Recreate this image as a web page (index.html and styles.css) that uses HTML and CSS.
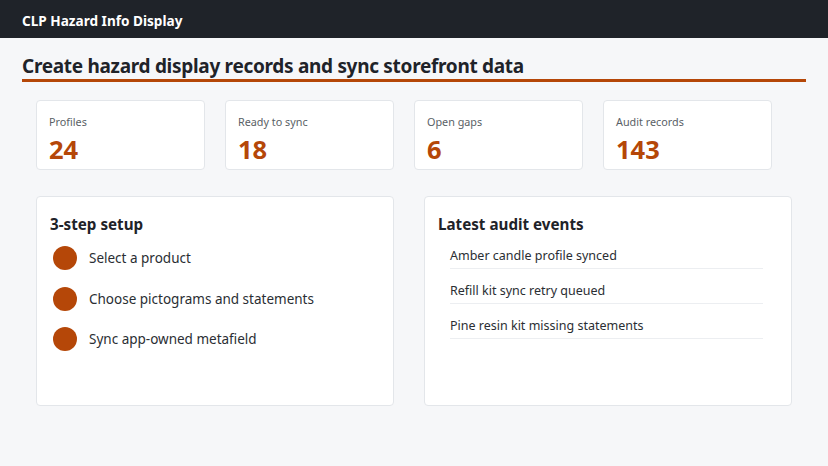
FILE: index.html
```html
<!DOCTYPE html>
<html lang="en">
<head>
<meta charset="utf-8">
<title>CLP Hazard Info Display</title>
<link rel="stylesheet" href="styles.css">
</head>
<body>
<header class="topbar">CLP Hazard Info Display</header>
<main class="page">
  <h1 class="page-title">Create hazard display records and sync storefront data</h1>
  <section class="stats">
    <div class="stat"><div class="stat-label">Profiles</div><div class="stat-value">24</div></div>
    <div class="stat"><div class="stat-label">Ready to sync</div><div class="stat-value">18</div></div>
    <div class="stat"><div class="stat-label">Open gaps</div><div class="stat-value">6</div></div>
    <div class="stat"><div class="stat-label">Audit records</div><div class="stat-value">143</div></div>
  </section>
  <section class="panels">
    <div class="panel">
      <h2 class="panel-title">3-step setup</h2>
      <ol class="steps">
        <li class="step"><span class="dot"></span>Select a product</li>
        <li class="step"><span class="dot"></span>Choose pictograms and statements</li>
        <li class="step"><span class="dot"></span>Sync app-owned metafield</li>
      </ol>
    </div>
    <div class="panel">
      <h2 class="panel-title">Latest audit events</h2>
      <ul class="events">
        <li class="event">Amber candle profile synced</li>
        <li class="event">Refill kit sync retry queued</li>
        <li class="event">Pine resin kit missing statements</li>
      </ul>
    </div>
  </section>
</main>
</body>
</html>
```
FILE: styles.css
```css
* { box-sizing: border-box; }
html, body { margin: 0; padding: 0; }
body {
  background: #f6f7f9;
  font-family: "Noto Sans", "Open Sans", sans-serif;
  color: #1f2329;
  width: 828px;
  height: 466px;
  overflow: hidden;
}
.topbar {
  height: 38px;
  background: #1f2329;
  color: #ffffff;
  font-weight: 700;
  font-size: 13.6px;
  line-height: 36px;
  padding-top: 3px;
  padding-left: 22px;
}
.page {
  padding: 14px 22px 0 22px;
}
.page-title {
  margin: 0;
  font-size: 19px;
  font-weight: 700;
  letter-spacing: -0.3px;
  line-height: 28px;
  border-bottom: 3px solid #b54708;
  height: 30px;
  color: #1f2329;
}
.stats {
  display: grid;
  grid-template-columns: repeat(4, 169px);
  gap: 20px;
  margin: 18px 14px 0 14px;
}
.stat {
  background: #fff;
  border: 1px solid #e3e6ea;
  border-radius: 4px;
  height: 70px;
  padding: 13px 12px 0 12px;
}
.stat-label {
  font-size: 10.8px;
  color: #5a5f66;
  line-height: 16px;
}
.stat-value {
  font-size: 25.5px;
  font-weight: 700;
  color: #b54708;
  line-height: 30px;
  margin-top: 4px;
}
.panels {
  display: grid;
  grid-template-columns: 358px 368px;
  gap: 30px;
  margin: 26px 14px 0 14px;
}
.panel {
  background: #fff;
  border: 1px solid #e3e6ea;
  border-radius: 4px;
  height: 210px;
  padding: 15px 14px 0 13px;
}
.panel-title {
  margin: 0;
  font-size: 15.2px;
  font-weight: 700;
  line-height: 24px;
  color: #1f2329;
}
.steps {
  list-style: none;
  margin: 10px 0 0 0;
  padding: 0 0 0 3px;
}
.step {
  display: flex;
  align-items: center;
  gap: 12px;
  font-size: 13.5px;
  color: #2a2e33;
  height: 24px;
  margin-bottom: 16.5px;
}
.dot {
  width: 24px;
  height: 24px;
  border-radius: 50%;
  background: #b54708;
  flex: none;
}
.events {
  list-style: none;
  margin: 10px 14px 0 12px;
  padding: 0;
}
.event {
  font-size: 12.5px;
  color: #2a2e33;
  line-height: 20px;
  padding: 0 0 2px 0;
  border-bottom: 1px solid #eceef1;
  margin-bottom: 12px;
}
```
